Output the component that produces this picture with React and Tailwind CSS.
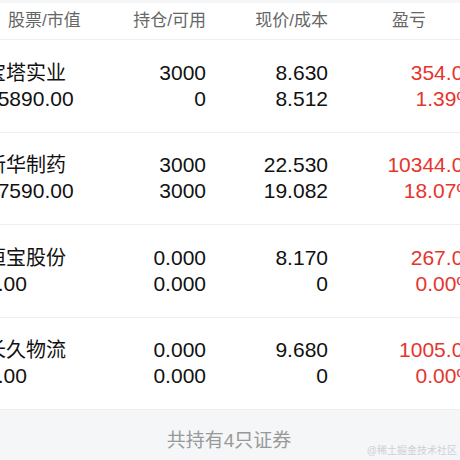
const holdings = [
  { name: "宝塔实业", value: "15890.00", qty: "3000", avail: "0", price: "8.630", cost: "8.512", pl: "354.00", pct: "1.39%" },
  { name: "新华制药", value: "67590.00", qty: "3000", avail: "3000", price: "22.530", cost: "19.082", pl: "10344.00", pct: "18.07%" },
  { name: "恒宝股份", value: "0.00", qty: "0.000", avail: "0.000", price: "8.170", cost: "0", pl: "267.00", pct: "0.00%" },
  { name: "长久物流", value: "0.00", qty: "0.000", avail: "0.000", price: "9.680", cost: "0", pl: "1005.00", pct: "0.00%" },
];

const font = { fontFamily: '"Liberation Sans", "Noto Sans CJK SC", sans-serif' };

export default function App() {
  return (
    <div className="relative w-[460px] h-[460px] overflow-hidden bg-[#f5f6f8]" style={font}>
      <div className="h-[3px] bg-[#f5f6f8]" />
      <div className="ml-[-14px] w-[489px] bg-white">
        <div className="grid grid-cols-[100px_120px_122px_147px] h-[37px] items-center border-b border-[#efefef] text-[17px] text-[#666]">
          <div className="pl-[22px]">股票/市值</div>
          <div className="text-right">持仓/可用</div>
          <div className="text-right">现价/成本</div>
          <div className="text-right pr-[49px]">盈亏</div>
        </div>
        {holdings.map((item, index) => (
          <div
            key={index}
            className="grid grid-cols-[100px_120px_122px_147px] h-[92.5px] content-center border-b border-[#efefef] text-[21px] leading-[26px] text-[#111]"
          >
            <div className="whitespace-nowrap">
              <div className="text-[20px]">{item.name}</div>
              <div>{item.value}</div>
            </div>
            <div className="text-right">
              <div>{item.qty}</div>
              <div>{item.avail}</div>
            </div>
            <div className="text-right">
              <div>{item.price}</div>
              <div>{item.cost}</div>
            </div>
            <div className="text-right text-[#e5352e] whitespace-nowrap">
              <div>{item.pl}</div>
              <div>{item.pct}</div>
            </div>
          </div>
        ))}
      </div>
      <div className="pt-[17px] text-center text-[19px] text-[#999] ml-[-2px]">共持有4只证券</div>
      <div className="absolute right-[3px] bottom-[2px] text-[10px] text-[#d0d0d4]">@稀土掘金技术社区</div>
    </div>
  );
}
